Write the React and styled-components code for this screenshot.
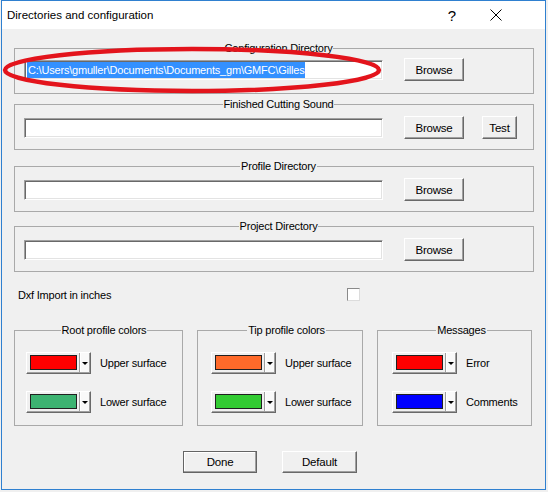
import React from "react";
import styled, { createGlobalStyle, css } from "styled-components";

const FONT = `"Liberation Sans", Arial, sans-serif`;

const Global = createGlobalStyle`
  html, body { margin: 0; padding: 0; background: #f0f0f0; }
  body { width: 548px; height: 492px; overflow: hidden; font-family: ${FONT}; }
`;

const Window = styled.div`
  position: relative;
  margin-left: 1px;
  width: 545px;
  height: 490px;
  box-sizing: border-box;
  border: 1px solid #2f80d0;
  background: #f0f0f0;
  display: flex;
  flex-direction: column;
`;

const TitleBar = styled.div`
  height: 28px;
  flex: none;
  background: #fff;
  display: flex;
  align-items: center;
  padding: 0 27px 0 5px;
  font-family: "Segoe UI", "Liberation Sans", Arial, sans-serif;
  font-size: 11.5px;
  color: #000;
`;

const Title = styled.span`
  flex: 1;
`;

const Caption = styled.div`
  width: 44px;
  height: 28px;
  display: flex;
  align-items: center;
  justify-content: center;
  font-size: 15px;
`;

const Client = styled.div`
  flex: 1;
  display: flex;
  flex-direction: column;
  padding: 0 11px 0 12px;
  font-family: ${FONT};
  font-size: 11px;
  letter-spacing: -0.2px;
  color: #000;
`;

const Group = styled.fieldset`
  margin: ${(p) => p.$mt}px 0 0;
  padding: ${(p) => p.$pt}px 0 ${(p) => p.$pb}px ${(p) => p.$pl}px;
  border: 1px solid #a9a9a9;
  min-width: 0;
`;

const Legend = styled.legend`
  margin: 0 auto;
  padding: 0 1px;
  line-height: 14px;
  font-size: 11px;
`;

const Row = styled.div`
  display: flex;
  align-items: center;
  height: 23px;
`;

const Textbox = styled.div`
  width: 359px;
  height: 20px;
  box-sizing: border-box;
  background: #fff;
  border: 1px solid;
  border-color: #a0a0a0 #fff #fff #a0a0a0;
  box-shadow: inset 1px 1px 0 #696969, inset -1px -1px 0 #e3e3e3;
  display: flex;
  align-items: center;
  padding-left: 2px;
  overflow: hidden;
  white-space: nowrap;
`;

const Selection = styled.span`
  background: #3390ff;
  color: #fff;
  line-height: 16px;
  padding: 0 1px;
`;

const Button = styled.button`
  width: ${(p) => p.$w}px;
  height: ${(p) => p.$h || 23}px;
  margin-left: ${(p) => p.$ml || 0}px;
  box-sizing: border-box;
  background: #f0f0f0;
  border: 1px solid;
  border-color: #fff #696969 #696969 #fff;
  box-shadow: inset -1px -1px 0 #a0a0a0;
  font-family: ${FONT};
  font-size: 11.5px;
  letter-spacing: -0.2px;
  color: #000;
  padding: 0;
  ${(p) =>
    p.$default &&
    css`
      border-color: #646464;
      box-shadow: inset -1px -1px 0 #a0a0a0, inset 1px 1px 0 #fff;
    `}
`;

const DxfRow = styled.div`
  display: flex;
  align-items: center;
  height: 13px;
  margin-top: 16px;
  padding-left: 4px;
`;

const DxfLabel = styled.span`
  width: 329px;
`;

const Checkbox = styled.div`
  width: 13px;
  height: 13px;
  box-sizing: border-box;
  background: #fff;
  border: 1px solid;
  border-color: #8a8a8a #dcdcdc #dcdcdc #8a8a8a;
`;

const ColorGrid = styled.div`
  display: grid;
  grid-template-columns: 169px 166px 155px;
  column-gap: 14px;
  margin-top: 22px;
`;

const ColorList = styled.div`
  display: flex;
  flex-direction: column;
  gap: 17px;
`;

const ColorItem = styled.div`
  display: flex;
  align-items: center;
  gap: 9px;
  white-space: nowrap;
`;

const ColorButton = styled.div`
  width: 65px;
  height: 22px;
  flex: none;
  box-sizing: border-box;
  display: flex;
  align-items: stretch;
  background: #f0f0f0;
  border: 1px solid;
  border-color: #fff #696969 #696969 #fff;
  box-shadow: inset -1px -1px 0 #a0a0a0;
`;

const Swatch = styled.div`
  width: 47px;
  box-sizing: border-box;
  margin: 2px 2px 3px 3px;
  border: 1px solid #202020;
  background: ${(p) => p.$c};
`;

const DropArrow = styled.div`
  flex: 1;
  margin-bottom: 1px;
  margin-right: 1px;
  border-left: 1px solid #a0a0a0;
  box-shadow: inset 1px 0 0 #fff;
  background: #f9f9f9;
  display: flex;
  align-items: center;
  justify-content: center;
  &::after {
    content: "";
    width: 0;
    height: 0;
    margin-top: 2px;
    border-left: 3px solid transparent;
    border-right: 3px solid transparent;
    border-top: 3px solid #000;
  }
`;

const Actions = styled.div`
  display: flex;
  gap: 25px;
  margin-top: 25px;
  padding-left: 169px;
`;

const Ellipse = styled.svg`
  position: absolute;
  left: 0;
  top: 44px;
  pointer-events: none;
`;

const paths = [
  { title: "Configuration Directory", value: "C:\\Users\\gmuller\\Documents\\Documents_gm\\GMFC\\Gilles", mt: 12, pt: 3, pb: 12, test: false },
  { title: "Finished Cutting Sound", value: "", mt: 3, pt: 5, pb: 10, test: true },
  { title: "Profile Directory", value: "", mt: 9, pt: 5, pb: 10, test: false },
  { title: "Project Directory", value: "", mt: 7, pt: 5, pb: 10, test: false },
];

const colorGroups = [
  { title: "Root profile colors", pl: 11, items: [["#ff0000", "Upper surface"], ["#3cb371", "Lower surface"]] },
  { title: "Tip profile colors", pl: 13, items: [["#ff6a2a", "Upper surface"], ["#33cc33", "Lower surface"]] },
  { title: "Messages", pl: 14, items: [["#ff0000", "Error"], ["#0000ff", "Comments"]] },
];

export default function App() {
  return (
    <>
      <Global />
      <Window>
        <TitleBar>
          <Title>Directories and configuration</Title>
          <Caption>?</Caption>
          <Caption>
            <svg width="12" height="12" viewBox="0 0 12 12">
              <path d="M0.5 0.5 L11.5 11.5 M11.5 0.5 L0.5 11.5" stroke="#000" strokeWidth="1" fill="none" />
            </svg>
          </Caption>
        </TitleBar>
        <Client>
          {paths.map((p) => (
            <Group key={p.title} $mt={p.mt} $pt={p.pt} $pb={p.pb} $pl={9}>
              <Legend>{p.title}</Legend>
              <Row>
                <Textbox>{p.value && <Selection>{p.value}</Selection>}</Textbox>
                <Button $w={60} $ml={21}>Browse</Button>
                {p.test && <Button $w={35} $ml={18}>Test</Button>}
              </Row>
            </Group>
          ))}
          <DxfRow>
            <DxfLabel>Dxf Import in inches</DxfLabel>
            <Checkbox />
          </DxfRow>
          <ColorGrid>
            {colorGroups.map((g) => (
              <Group key={g.title} $mt={0} $pt={15} $pb={12} $pl={g.pl}>
                <Legend>{g.title}</Legend>
                <ColorList>
                  {g.items.map(([c, label]) => (
                    <ColorItem key={label}>
                      <ColorButton>
                        <Swatch $c={c} />
                        <DropArrow />
                      </ColorButton>
                      <span>{label}</span>
                    </ColorItem>
                  ))}
                </ColorList>
              </Group>
            ))}
          </ColorGrid>
          <Actions>
            <Button $w={74} $h={22} $default>Done</Button>
            <Button $w={75} $h={22}>Default</Button>
          </Actions>
        </Client>
        <Ellipse width="392" height="52" viewBox="0 0 392 52">
          <ellipse cx="190" cy="25" rx="187" ry="21" fill="none" stroke="#e3141c" strokeWidth="4.5" />
        </Ellipse>
      </Window>
    </>
  );
}
